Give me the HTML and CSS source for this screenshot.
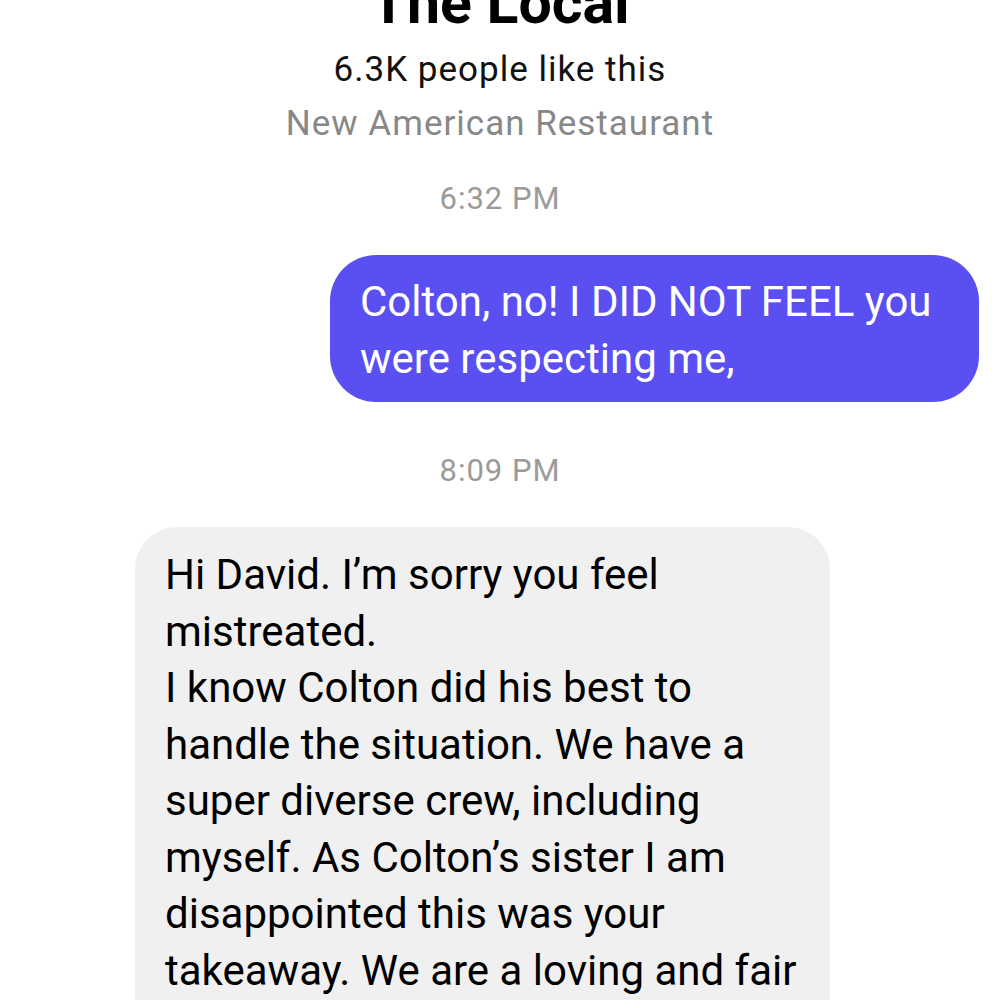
FILE: index.html
```html
<!DOCTYPE html>
<html>
<head>
<meta charset="utf-8">
<link rel="stylesheet" href="styles.css">
</head>
<body>
<div class="page">
  <header class="profile">
    <h1 class="name">The Local</h1>
    <div class="likes">6.3K people like this</div>
    <div class="category">New American Restaurant</div>
  </header>
  <div class="stamp stamp-first">6:32 PM</div>
  <div class="row row-out">
    <div class="bubble out">Colton, no! I DID NOT FEEL you<br>were respecting me,</div>
  </div>
  <div class="stamp stamp-second">8:09 PM</div>
  <div class="row row-in">
    <div class="bubble in">Hi David. I’m sorry you feel<br>mistreated.<br>I know Colton did his best to<br>handle the situation. We have a<br>super diverse crew, including<br>myself. As Colton’s sister I am<br>disappointed this was your<br>takeaway. We are a loving and fair<br>group of people.</div>
  </div>
</div>
</body>
</html>
```
FILE: styles.css
```css
html, body {
  margin: 0;
  padding: 0;
  background: #ffffff;
  overflow: hidden;
}
.page {
  width: 1000px;
  height: 1000px;
  overflow: hidden;
  font-family: Roboto, "Liberation Sans", sans-serif;
  display: flex;
  flex-direction: column;
}
.profile {
  display: flex;
  flex-direction: column;
  align-items: center;
  margin-top: -32px;
}
.name {
  margin: 0;
  font-size: 59px;
  font-weight: 700;
  line-height: 70px;
  color: #000;
}
.likes {
  font-size: 35px;
  letter-spacing: 1px;
  line-height: 54px;
  color: #111;
  margin-top: 5px;
}
.category {
  font-size: 35px;
  letter-spacing: 1px;
  line-height: 54px;
  color: #888888;
}
.stamp {
  text-align: center;
  font-size: 31px;
  letter-spacing: 1px;
  line-height: 40px;
  color: #9a9a9a;
}
.stamp-first {
  margin-top: 28px;
}
.stamp-second {
  margin-top: 49px;
}
.row {
  display: flex;
}
.row-out {
  justify-content: flex-end;
  padding-right: 21px;
  margin-top: 36px;
}
.row-in {
  justify-content: flex-start;
  padding-left: 135px;
  margin-top: 36px;
}
.bubble {
  font-size: 42px;
  line-height: 57px;
}
.out {
  width: 649px;
  box-sizing: border-box;
  background: #5a50f2;
  color: #fff;
  border-radius: 46px;
  padding: 18px 16px 15px 30px;
}
.in {
  width: 695px;
  box-sizing: border-box;
  background: #f0f0f0;
  color: #000;
  border-radius: 42px;
  line-height: 56.5px;
  padding: 20px 16px 30px 30px;
}
```
